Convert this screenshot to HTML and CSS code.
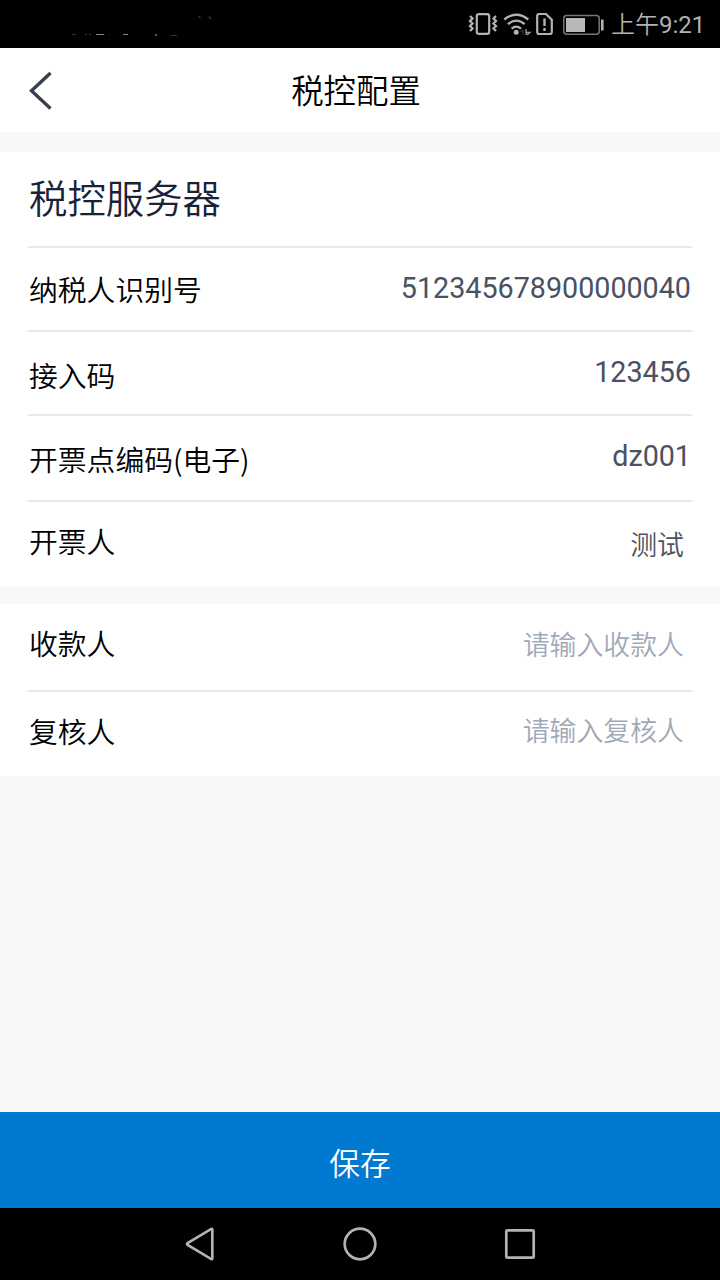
FILE: index.html
```html
<!DOCTYPE html>
<html lang="zh-CN">
<head>
<meta charset="utf-8">
<title>税控配置</title>
<link rel="stylesheet" href="styles.css">
</head>
<body>
<div class="screen">
  <div class="status">
    <svg class="notices" width="200" height="48" viewBox="0 0 200 48">
      <g fill="#888"><path d="M46 34h8v1h-8zM73 34h5v1h-5z"/><path fill="#555" d="M105 34h2v2h-2z"/><path fill="#333" d="M22 34h4v1h-4zM35 34h2v1h-2zM39 34h2v1h-2zM59 34h1v1h-1zM121 35h6v1h-6z"/></g>
      <path d="M148.500 17.500l2-1M159 16.500l2 2.500" stroke="#063d7c" stroke-width="1.500" fill="none"/>
    </svg>
    <svg class="indicators" width="140" height="48" viewBox="468 0 140 48" fill="none" stroke="#b2b2b2">
      <rect x="476.800" y="14.100" width="12.400" height="19.800" rx="2.200" stroke-width="2.200"/>
      <path d="M470 16l2.500 2.500-2.500 2.500 2.500 2.500-2.500 2.500 2.500 2.500-2.500 2.500M496 16l-2.500 2.500 2.500 2.500-2.500 2.500 2.500 2.500-2.500 2.500 2.500 2.500" stroke-width="2.300"/>
      <path d="M504.300 19.500q12-9.500 24 0M507.900 24.200q8.400-7.200 16.800 0M511.600 28.600q4.700-4 9.400 0" stroke-width="2.300"/>
      <circle cx="516.200" cy="32.300" r="2.500" fill="#b2b2b2" stroke="none"/>
      <path d="M520.500 32l2.500-2.500v5" stroke="#444" stroke-width="1"/>
      <path d="M526 29v6M526.500 32.500h3.500l-3 2.500" stroke="#999" stroke-width="1.300"/>
      <path d="M537.200 16a2 2 0 0 1 2-2h6.800l5.800 5.800V32a2 2 0 0 1-2 2h-10.600a2 2 0 0 1-2-2z" stroke-width="2.200"/>
      <path d="M544.500 18.500v7.500M544.500 28v3" stroke-width="2.400"/>
      <rect x="563.800" y="15.600" width="35.400" height="18.600" rx="3" stroke="#777" stroke-width="1.500"/>
      <path d="M566 18h19v14h-19z" fill="#b8b8b8" stroke="none"/>
      <path d="M602.300 19.500v11" stroke-width="2.600"/>
    </svg>
    <span class="time"><span class="period">上午</span>9:21</span>
  </div>
  <header class="header">
    <svg class="back" width="28" height="44" viewBox="26 68 28 44" fill="none" stroke="#3b4050" stroke-width="3.400"><path d="M50.500 73L31.500 90.800l19 17.800"/></svg>
    <h1 class="title">税控配置</h1>
  </header>
  <main class="content">
    <section class="card">
      <h2 class="heading">税控服务器</h2>
      <div class="row"><span class="label">纳税人识别号</span><span class="value">512345678900000040</span></div>
      <div class="row row-code"><span class="label">接入码</span><span class="value">123456</span></div>
      <div class="row row-point"><span class="label">开票点编码(电子)</span><span class="value">dz001</span></div>
      <div class="row row-issuer"><span class="label">开票人</span><span class="value input">测试</span></div>
    </section>
    <section class="card">
      <div class="row row-payee"><span class="label">收款人</span><span class="value input placeholder">请输入收款人</span></div>
      <div class="row row-review"><span class="label">复核人</span><span class="value input placeholder">请输入复核人</span></div>
    </section>
  </main>
  <button class="save">保存</button>
  <nav class="nav">
    <svg width="40" height="40" viewBox="0 0 40 40"><path d="M32.300 5.500q0-1-1-.6L7.600 19q-1.200 1 0 2l23.700 14.100q1 .4 1-.6z"/></svg>
    <svg width="40" height="40" viewBox="0 0 40 40"><circle cx="20" cy="20" r="15.300"/></svg>
    <svg width="40" height="40" viewBox="0 0 40 40"><rect x="6.300" y="6.300" width="27.400" height="27.400" rx="1"/></svg>
  </nav>
</div>
</body>
</html>
```
FILE: styles.css
```css
* { box-sizing: border-box; }
body { margin: 0; font-family: "Noto Sans CJK SC", sans-serif; font-weight: 350; color: #000; }
.screen { display: flex; flex-direction: column; width: 720px; height: 1280px; background: #f8f8f8; }
.status { display: flex; height: 48px; padding: 0 15px 0 50px; background: #000; color: #b2b2b2; }
.indicators { margin-left: auto; }
.time { width: 94px; margin-left: 3px; font: 400 24px/50px Roboto, "Noto Sans CJK SC", sans-serif; white-space: nowrap; }
.period { font-weight: 350; }
.header { display: grid; grid-template-columns: 28px 1fr 36px; align-items: center; height: 84px; padding: 0 26px; background: #fff; }
.title { height: 84px; margin: 0; text-align: center; font-size: 32.400px; font-weight: 350; line-height: 82px; }
.content { display: flex; flex: 1; flex-direction: column; gap: 18px; padding-top: 20px; }
.card { padding: 0 28px; background: #fff; }
.heading { height: 94px; margin: 0; padding-left: 1px; color: #1a2238; font-size: 38.400px; font-weight: 350; line-height: 88px; }
.row { display: flex; justify-content: space-between; height: 84px; border-top: 2px solid #e8e8e8; }
.label { padding-left: 1px; font-size: 28.800px; line-height: 81px; }
.value { padding-right: 1px; color: #4a5162; font: 400 28.700px/80px Roboto, sans-serif; }
.input { padding-right: 8px; font: 350 26.900px/83px "Noto Sans CJK SC", sans-serif; }
.placeholder { color: #9fa9b7; }
.row-code .label { line-height: 85px; }
.row-point { height: 86px; }
.row-point .label { line-height: 85px; }
.row-issuer { height: 86px; }
.row-issuer .label { line-height: 78px; }
.row-payee { height: 86px; border-top: 0; }
.row-payee .label { line-height: 77px; }
.row-payee .value { line-height: 79px; }
.row-review { height: 86px; }
.row-review .value { line-height: 75px; }
.row-review .label { line-height: 78px; }
.save { height: 96px; border: 0; padding: 0; background: #0079d0; color: #fff; font: 350 30.700px/99px "Noto Sans CJK SC", sans-serif; }
.nav { display: flex; justify-content: center; align-items: center; gap: 120px; height: 72px; background: #000; fill: none; stroke: #b2b2b2; stroke-width: 2.700; }
```
